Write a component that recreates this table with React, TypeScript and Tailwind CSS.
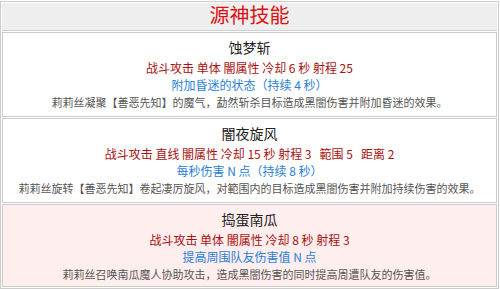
import React from "react";

const font = { fontFamily: '"Noto Sans CJK SC", "Noto Sans", sans-serif' };

type Skill = { name: string; stats: string; effect: string; desc: string; pink?: boolean };

const skills: Skill[] = [
  {
    name: "蚀梦斩",
    stats: "战斗攻击 单体 闇属性 冷却 6 秒 射程 25",
    effect: "附加昏迷的状态（持续 4 秒）",
    desc: "莉莉丝凝聚【善恶先知】的魔气，勐然斩杀目标造成黑闇伤害并附加昏迷的效果。",
  },
  {
    name: "闇夜旋风",
    stats: "战斗攻击 直线 闇属性 冷却 15 秒 射程 3\u00a0\u00a0 範围 5\u00a0\u00a0 距离 2",
    effect: "每秒伤害 N 点（持续 8 秒）",
    desc: "莉莉丝旋转【善恶先知】卷起凄厉旋风，对範围内的目标造成黑闇伤害并附加持续伤害的效果。",
  },
  {
    name: "捣蛋南瓜",
    stats: "战斗攻击 单体 闇属性 冷却 8 秒 射程 3",
    effect: "提高周围队友伤害值 N 点",
    desc: "莉莉丝召唤南瓜魔人协助攻击，造成黑闇伤害的同时提高周遭队友的伤害值。",
    pink: true,
  },
];

export default function App() {
  return (
    <div className="w-[500px] h-[289px] bg-white pt-px" style={font}>
      <div className="w-[499px] border border-[#cccccc] p-px flex flex-col gap-px">
        <div className="h-[28px] bg-[#eeeeee] border-b border-[#d0d0d0] flex items-center justify-center text-[20px] leading-none text-[#dd1111] pb-[3px]">
          源神技能
        </div>
        {skills.map((s) => (
          <div
            key={s.name}
            className={`border border-[#cccccc] flex flex-col items-center overflow-hidden ${s.pink ? "bg-[#ffeeee] h-[83px]" : "bg-white h-[85px]"}`}
          >
            <div className="mt-[5px] text-[14px] leading-[18px] text-[#222222] whitespace-nowrap">{s.name}</div>
            <div className="mt-[4px] text-[12px] leading-[16px] text-[#aa1111] whitespace-pre">{s.stats}</div>
            <div className="mt-px text-[12px] leading-[16px] text-[#2a7ed8] whitespace-nowrap">{s.effect}</div>
            <div className="mt-px text-[11px] leading-[16px] text-[#555555] whitespace-nowrap">{s.desc}</div>
          </div>
        ))}
      </div>
    </div>
  );
}
